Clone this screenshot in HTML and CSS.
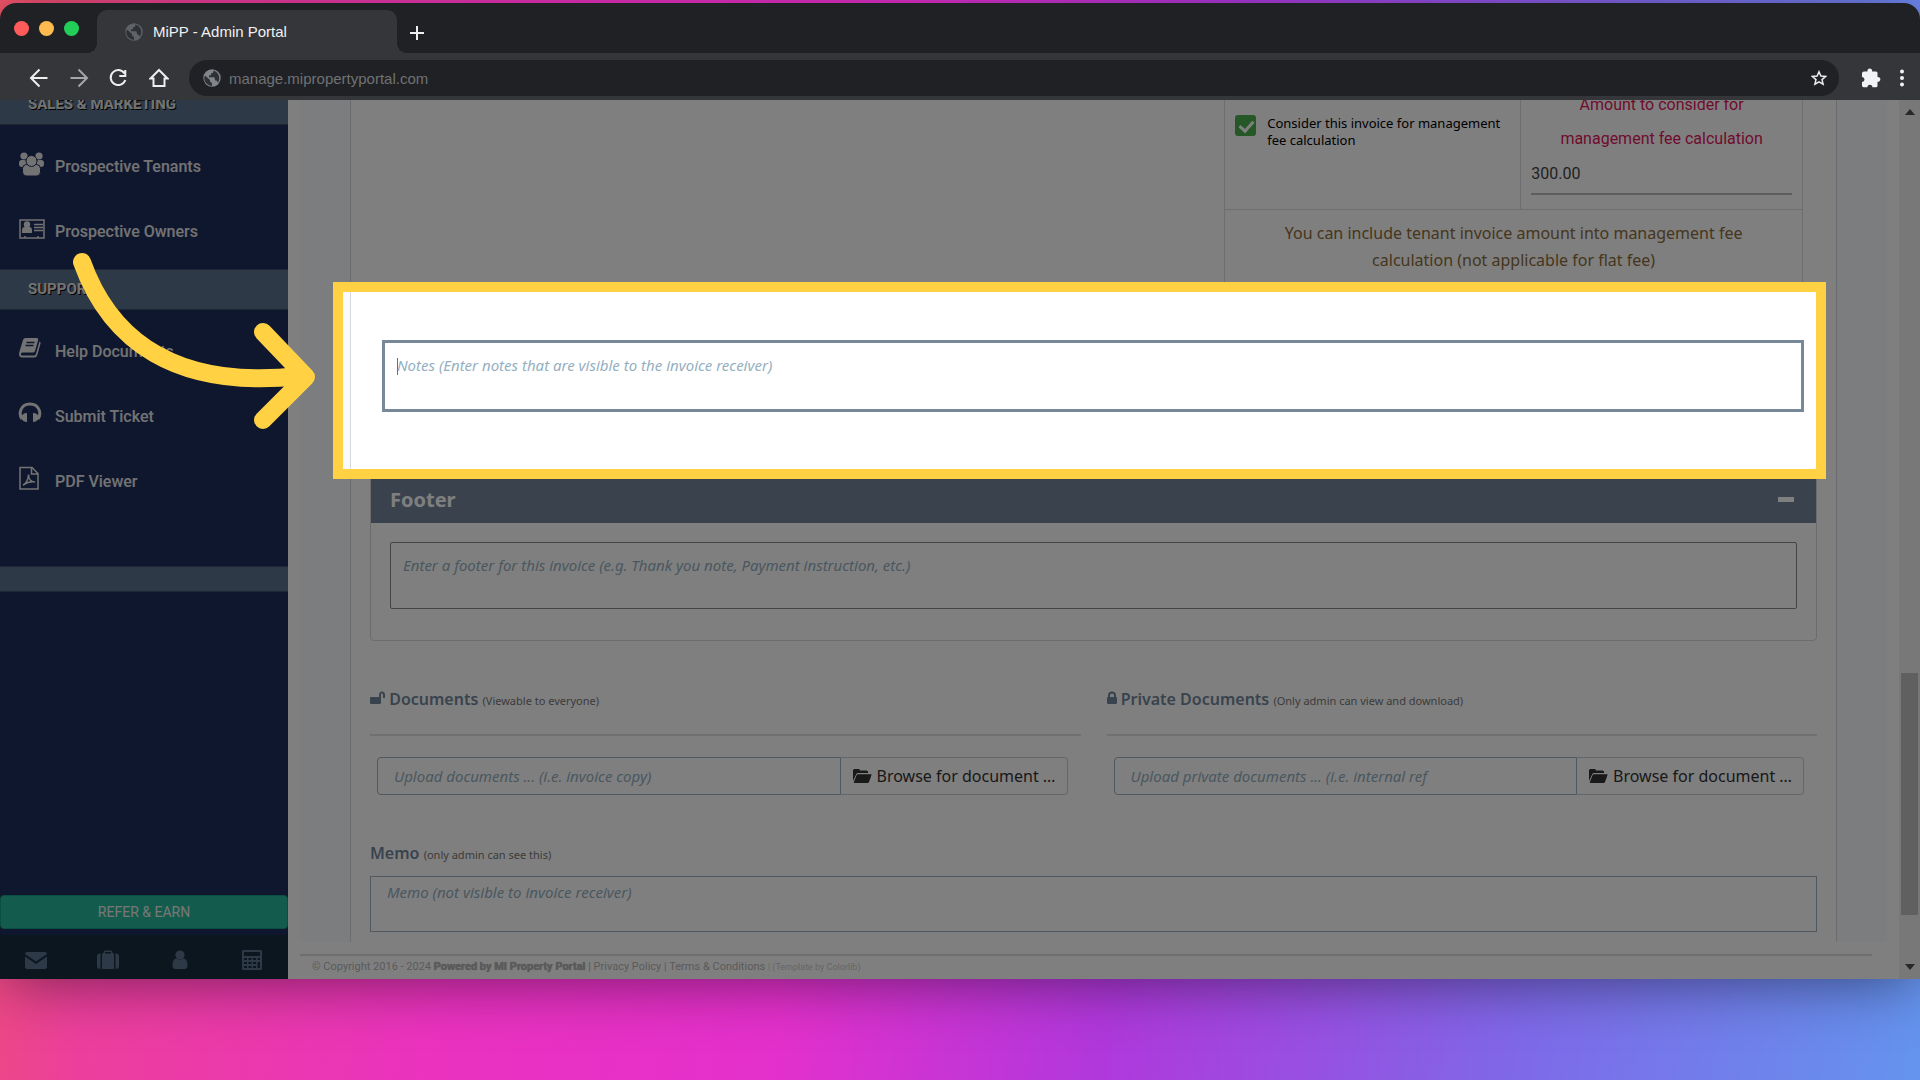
FILE: index.html
```
<!DOCTYPE html>
<html lang="en">
<head>
    <meta charset="UTF-8">
    <meta name="viewport" content="width=device-width, initial-scale=1.0">
    <title>MiPP - Admin Portal</title>
    <link rel="stylesheet" href="styles.css">
</head>
<body>
    <svg class="sprite" aria-hidden="true">
        <symbol id="globe" viewBox="0 0 18 18">
            <circle cx="9" cy="9" r="8.7"/>
            <path class="globe-land" d="M2 6.5 7 11v1.5l2 1.800V17A8 8 0 0 1 1.200 9 8 8 0 0 1 2 6.500zM10.500 1.500c0 2-.8 2.800-2.500 2.800v2H6v2h5.300l1 3.200h1.200l1.500 2A8 8 0 0 0 10.500 1.500z"/>
        </symbol>
        <symbol id="folder" viewBox="0 0 20 16">
            <path d="M1 13V2.500Q1 1 2.500 1h4.200Q8 1 8 2.500h6.500Q16 2.500 16 4v1H6Q4.800 5 4.200 6.200z"/>
            <path d="M6 6.200h13q.8 0 .5.800L17 14q-.4 1-1.400 1H2.500q-.9 0-.6-.9L4.700 7q.4-.8 1.300-.8z"/>
        </symbol>
    </svg>

    <div class="window">
        <div class="tab-strip">
            <div class="lights">
                <span class="light red"></span>
                <span class="light amber"></span>
                <span class="light green"></span>
            </div>
            <div class="tab">
                <svg class="globe" width="18" height="18"><use href="#globe"/></svg>
                <span>MiPP - Admin Portal</span>
            </div>
            <button class="icon-button new-tab" aria-label="New tab">
                <svg width="16" height="16" viewBox="0 0 16 16"><path d="M8 1v14M1 8h14"/></svg>
            </button>
        </div>

        <div class="toolbar">
            <div class="nav-buttons">
                <button class="icon-button" aria-label="Back">
                    <svg width="20" height="20" viewBox="0 0 20 20"><path d="M18.500 10H2.500M10.500 1.500 2 10l8.500 8.500"/></svg>
                </button>
                <button class="icon-button faded" aria-label="Forward">
                    <svg width="20" height="20" viewBox="0 0 20 20"><path d="M1.500 10h16M9.500 1.500 18 10l-8.500 8.500"/></svg>
                </button>
                <button class="icon-button" aria-label="Reload">
                    <svg width="20" height="20" viewBox="0 0 20 20"><path d="M15.500 5.500A7.500 7.500 0 1 0 16.300 12M16.300 2v6h-6"/></svg>
                </button>
                <button class="icon-button" aria-label="Home">
                    <svg width="20" height="20" viewBox="0 0 20 20"><path d="M1.500 10.500 10 2l8.500 8.500h-3V18h-11v-7.500z"/></svg>
                </button>
            </div>
            <div class="address">
                <svg class="globe bright" width="18" height="18"><use href="#globe"/></svg>
                <input type="text" aria-label="Address" value="manage.mipropertyportal.com">
                <button class="icon-button star" aria-label="Bookmark">
                    <svg width="16" height="16" viewBox="0 0 16 16"><path d="m8 1.800 1.900 4.300 4.700.4-3.600 3.100 1.100 4.600L8 11.800l-4.100 2.400L5 9.600 1.400 6.500l4.700-.4z"/></svg>
                </button>
            </div>
            <button class="icon-button solid extensions" aria-label="Extensions">
                <svg width="20" height="20" viewBox="0 0 20 20"><path d="M1 5.500Q1 3.500 3 3.500h3.500a2.400 2.400 0 1 1 4.600 0H15q1.500 0 1.500 1.500v4a2.400 2.400 0 1 1 0 4.700v4q0 1.500-1.500 1.500h-3.600a2.500 2.500 0 0 0-5 0H2.500Q1 19.200 1 17.500V14a2.500 2.500 0 0 0 0-5z"/></svg>
            </button>
            <button class="icon-button solid" aria-label="Menu">
                <svg width="6" height="18" viewBox="0 0 6 18"><circle cx="3" cy="2.500" r="2"/><circle cx="3" cy="9" r="2"/><circle cx="3" cy="15.500" r="2"/></svg>
            </button>
        </div>

        <div class="viewport">
            <aside class="sidebar">
                <h3 class="sales">SALES &amp; MARKETING</h3>
                <ul>
                    <li><a href="#">
                        <svg width="28" height="26" viewBox="0 0 28 26"><circle cx="6" cy="5" r="3.600"/><circle cx="21" cy="5" r="3.600"/><rect x="1" y="9" width="8" height="7" rx="3"/><rect x="18" y="9" width="8" height="7" rx="3"/><g class="cutout"><rect x="4.500" y="13.500" width="18" height="11.500" rx="4"/><circle cx="13.500" cy="10" r="5.500"/></g></svg>
                        Prospective Tenants</a></li>
                    <li><a href="#">
                        <svg width="28" height="26" viewBox="0 0 28 26"><path class="line" d="M2 4h24v18H2zM16 8.500h9M16 11.500h9M16 14.500h9M7 20v2M20 20v2"/><circle cx="9" cy="8.500" r="3.200"/><path d="M4 17v-3q0-3 3-3h4q3 0 3 3v3z"/></svg>
                        Prospective Owners</a></li>
                </ul>
                <h3>SUPPORT</h3>
                <ul>
                    <li><a href="#">
                        <svg width="28" height="26" viewBox="0 0 28 26"><path d="M7.500 2h11.200q2 0 1.500 2L17 15q-.4 1.500-2 1.500H4.500q-1.700 0-1.700 1.500t1.700 1.500h11.800q1.200 0 1.500-1.200L21.500 5.500q1.500.5 1 2L19.300 19q-.6 2.500-3 2.500H4.500Q1 21.500 1 18q0-1 .5-2.500L5 4q.5-2 2.500-2z"/><path class="slot" d="M8.500 6.500h8M7.500 9.500h8"/></svg>
                        Help Documents</a></li>
                    <li><a href="#">
                        <svg width="28" height="26" viewBox="0 0 28 26"><path class="arc" d="M4 18c-4-6-1-15 8-15s12 9 8 15"/><path d="M9 12v9q-4 0-6-4 1-5 6-5zM15 12v9q4 0 6-4-1-5-6-5z"/></svg>
                        Submit Ticket</a></li>
                    <li><a href="#">
                        <svg width="28" height="26" viewBox="0 0 28 26"><path class="line" d="M2 1.500h12l6 6V23H2zM13.500 1.500V8H20M5 19c3-1 5.500-6 5.500-10.500 0 5 3 8 6.500 7.500-4-1-8 .5-12 3z"/></svg>
                        PDF Viewer</a></li>
                </ul>
                <h3 class="blank"></h3>
                <div class="sidebar-bottom">
                    <button class="refer">REFER &amp; EARN</button>
                    <div class="shortcuts">
                        <a href="#" aria-label="Mail"><svg width="22" height="20" viewBox="0 0 22 20"><path d="M0 4q0-2 2-2h18q2 0 2 2L11 11.500zM0 6.500 11 14l11-7.500V17q0 2-2 2H2q-2 0-2-2z"/></svg></a>
                        <a href="#" aria-label="Briefcase"><svg width="22" height="20" viewBox="0 0 22 20"><path d="M3.500 3.500V19Q0 19 0 16V6.500q0-3 3.500-3zM18.500 3.500V19q3.500 0 3.500-3V6.500q0-3-3.500-3zM5 19V3.500h1.500V2q0-1.500 1.500-1.500h6q1.500 0 1.500 1.500v1.500H17V19zM8 3.500h6V2H8z" fill-rule="evenodd"/></svg></a>
                        <a href="#" aria-label="Profile"><svg width="22" height="20" viewBox="0 0 22 20"><circle cx="11" cy="5" r="4.600"/><path d="M3.500 15q0-6.500 4-6.500 3.500 2.500 7 0 4 0 4 6.500 0 4-3 4h-9q-3 0-3-4z"/></svg></a>
                        <a href="#" aria-label="Calculator"><svg width="22" height="20" viewBox="0 0 22 20"><path fill-rule="evenodd" d="M1 1q0-1 1-1h18q1 0 1 1v18q0 1-1 1H2q-1 0-1-1zM3 2v4h16V2zM3 8v2h3V8zM7.500 8v2h3V8zM12 8v2h3V8zM16.500 8v2H19V8zM3 12v2h3v-2zM7.500 12v2h3v-2zM12 12v2h3v-2zM16.500 12v6H19v-6zM3 16v2h3v-2zM7.500 16v2h3v-2zM12 16v2h3v-2z"/></svg></a>
                    </div>
                </div>
            </aside>

            <main class="main">
                <div class="page">
                    <div class="invoice">
                        <table class="fee-table">
                            <tr>
                                <td class="fee-check">
                                    <label>
                                        <input type="checkbox" checked>
                                        <span>Consider this invoice for management fee calculation</span>
                                    </label>
                                </td>
                                <td class="fee-amount">
                                    <label for="amount">Amount to consider for management fee calculation</label>
                                    <input type="text" id="amount" value="300.00">
                                </td>
                            </tr>
                            <tr>
                                <td class="fee-note" colspan="2">You can include tenant invoice amount into management fee calculation (not applicable for flat fee)</td>
                            </tr>
                        </table>

                        <div class="notes">
                            <textarea aria-label="Notes" placeholder="Notes (Enter notes that are visible to the invoice receiver)"></textarea>
                        </div>

                        <section class="panel">
                            <header>
                                <h2>Footer</h2>
                                <button class="collapse" aria-label="Collapse"></button>
                            </header>
                            <textarea aria-label="Footer" placeholder="Enter a footer for this invoice (e.g. Thank you note, Payment instruction, etc.)"></textarea>
                        </section>

                        <div class="documents">
                            <section>
                                <h4>
                                    <svg width="15" height="14" viewBox="0 0 15 14"><path d="M1 6h8V4Q9 .5 12 .5T15 4v3h-2V4q0-1.700-1-1.700T11 4v8q0 1-1 1H1q-1 0-1-1V7q0-1 1-1z"/></svg>
                                    <label for="docs">Documents</label> <small>(Viewable to everyone)</small>
                                </h4>
                                <div class="upload">
                                    <input type="text" id="docs" placeholder="Upload documents ... (i.e. invoice copy)">
                                    <button><svg width="20" height="16"><use href="#folder"/></svg>Browse for document …</button>
                                </div>
                            </section>
                            <section>
                                <h4>
                                    <svg width="10" height="14" viewBox="0 0 10 14"><path fill-rule="evenodd" d="M1 6V4.500Q1 .5 5 .5t4 4V6q1 0 1 1v5q0 1-1 1H1q-1 0-1-1V7q0-1 1-1zM3 6h4V4.500Q7 2.400 5 2.400T3 4.500z"/></svg>
                                    <label for="private-docs">Private Documents</label> <small>(Only admin can view and download)</small>
                                </h4>
                                <div class="upload">
                                    <input type="text" id="private-docs" placeholder="Upload private documents ... (i.e. internal ref">
                                    <button><svg width="20" height="16"><use href="#folder"/></svg>Browse for document …</button>
                                </div>
                            </section>
                        </div>

                        <div class="memo">
                            <h4><label for="memo">Memo</label> <small>(only admin can see this)</small></h4>
                            <textarea id="memo" placeholder="Memo (not visible to invoice receiver)"></textarea>
                        </div>
                    </div>
                </div>
                <footer class="copyright">
                    © Copyright 2016 - 2024 <b>Powered by MI Property Portal</b> | <a href="#">Privacy Policy</a> | <a href="#">Terms &amp; Conditions</a> <small>| (Template by <a href="#">Colorlib</a>)</small>
                </footer>
            </main>

            <div class="scrollbar">
                <svg width="10" height="6" viewBox="0 0 10 6"><path d="M5 0l5 6H0z"/></svg>
                <div class="track"><div class="thumb"></div></div>
                <svg width="10" height="6" viewBox="0 0 10 6"><path d="M0 0h10L5 6z"/></svg>
            </div>

            <div class="highlight"></div>
            <svg class="arrow" width="250" height="190" viewBox="70 250 250 190"><path d="M82 262C110 340 175 390 300 376M263 332l43 45-43 43"/></svg>
        </div>
    </div>
</body>
</html>
```
FILE: styles.css
```
* {
    box-sizing: border-box;
}

body {
    display: flex;
    flex-direction: column;
    height: 100vh;
    margin: 0;
    padding: 3px 0 101px;
    overflow: hidden;
    font-family: "Noto Sans", sans-serif;
    font-size: 16px;
    color: #333;
    background: linear-gradient(97deg, #ee5468 0%, #ec3f9c 10%, #ea32c0 28%, #e430cc 44%, #b038dc 60%, #7f68e8 80%, #6494ee 100%);
}

button, input, textarea {
    font: inherit;
    border: 0;
    background: none;
}

a {
    color: inherit;
    text-decoration: none;
}

.sprite {
    position: absolute;
    width: 0;
    height: 0;
}

.window {
    display: flex;
    flex: 1;
    flex-direction: column;
    min-height: 0;
    border-radius: 16px 16px 0 0;
    box-shadow: 0 8px 60px -6px rgba(0, 0, 0, 0.5);
}

/* Browser chrome */
.tab-strip {
    display: flex;
    align-items: center;
    height: 50px;
    padding-left: 14px;
    border-radius: 16px 16px 0 0;
    background: #202124;
    font-family: "Liberation Sans", sans-serif;
}

.lights {
    display: flex;
    gap: 10px;
    width: 83px;
}

.light {
    width: 15px;
    height: 15px;
    border-radius: 50%;
}

.red { background: #ff5b5b; }
.amber { background: #ffbb4f; }
.green { background: #23ce58; }

.tab {
    position: relative;
    display: flex;
    align-items: center;
    align-self: flex-end;
    gap: 10px;
    width: 300px;
    height: 43px;
    padding: 0 28px;
    border-radius: 10px 10px 0 0;
    background: #35363a;
    color: #f1f1f1;
    font-size: 15px;
}

.tab::before, .tab::after {
    content: "";
    position: absolute;
    bottom: 0;
    width: 10px;
    height: 10px;
}

.tab::before {
    right: 100%;
    background: radial-gradient(circle at 0 0, #202124 10px, #35363a 10px);
}

.tab::after {
    left: 100%;
    background: radial-gradient(circle at 100% 0, #202124 10px, #35363a 10px);
}

.globe {
    fill: #5f6368;
}

.globe.bright {
    fill: #80868b;
}

.globe-land {
    fill: #303134;
}

.icon-button {
    display: flex;
    padding: 0;
    fill: none;
    stroke: #eee;
    stroke-width: 2;
}

.icon-button.faded {
    stroke: #a5a6a8;
}

.icon-button.solid {
    fill: #f1f3f4;
    stroke: none;
}

.icon-button.star {
    stroke-width: 1.5;
}

.new-tab {
    margin: 10px 12px 0;
}

.toolbar {
    display: flex;
    align-items: center;
    height: 47px;
    padding: 3px 15px 0 29px;
    background: #35363a;
}

.nav-buttons {
    display: flex;
    gap: 20px;
    width: 160px;
}

.address {
    display: flex;
    flex: 1;
    align-items: center;
    gap: 8px;
    height: 36px;
    padding: 0 12px 0 14px;
    border-radius: 18px;
    background: #202124;
}

.address input {
    flex: 1;
    padding: 0;
    font-family: "Liberation Sans", sans-serif;
    font-size: 15px;
    color: #6f7276;
}

.extensions {
    margin: 0 18px 0 22px;
}

/* Page area */
.viewport {
    position: relative;
    display: flex;
    flex: 1;
    min-height: 0;
    overflow: hidden;
    background: #fff;
}

.sidebar {
    display: flex;
    flex-direction: column;
    width: 288px;
    background: #1e2f5e;
    color: #e7e7e7;
    font-family: Roboto, sans-serif;
}

.sidebar h3 {
    flex-shrink: 0;
    height: 41px;
    margin: 0;
    padding-left: 28px;
    border: 1px solid #3a4f6c;
    border-width: 1px 0;
    background: #5a738e;
    font-size: 15px;
    line-height: 39px;
    text-shadow: 1px 1px #000;
}

.sidebar .sales {
    margin-top: -16px;
}

.sidebar .blank {
    height: 26px;
    margin-top: 47px;
}

.sidebar ul {
    margin: 0;
    padding: 9px 0 5px;
    list-style: none;
}

.sidebar li a {
    display: flex;
    align-items: center;
    gap: 9px;
    height: 65px;
    padding-left: 18px;
    font-weight: 500;
}

.sidebar li svg {
    margin-bottom: 5px;
    fill: #e7e7e7;
}

.cutout {
    stroke: #1e2f5e;
}

.line, .arc {
    fill: none;
    stroke: #e7e7e7;
    stroke-width: 1.5;
}

.arc {
    stroke-width: 3;
}

.slot {
    stroke: #1e2f5e;
    stroke-width: 1.5;
}

.sidebar-bottom {
    margin-top: auto;
}

.refer {
    display: block;
    width: 100%;
    height: 34px;
    margin-bottom: 6px;
    border: 1px solid #169f85;
    border-radius: 4px;
    background: #26b99a;
    color: #eee;
    font-size: 14px;
}

.shortcuts {
    display: flex;
    height: 44px;
    padding-top: 6px;
    background: #172d3c;
    fill: #5a738e;
}

.shortcuts a {
    display: flex;
    flex: 1;
    align-items: center;
    justify-content: center;
}

.main {
    flex: 1;
    padding: 0 12px;
}

.page {
    padding: 0 50px;
    background: #f8fafd;
}

.invoice {
    padding: 0 19px 10px;
    border: 1px solid #d5d9de;
    border-width: 0 1px;
    background: #fff;
}

.fee-table {
    width: 40%;
    margin: -13px 14px 0 auto;
    border-collapse: collapse;
}

.fee-table td {
    padding: 0;
    border: 1px solid #ddd;
    vertical-align: top;
}

.fee-table .fee-check {
    width: 296px;
    padding: 27px 10px 0;
    color: #000;
    font-size: 13px;
    line-height: 17px;
}

.fee-check label {
    display: flex;
    gap: 11px;
}

.fee-check input {
    flex-shrink: 0;
    appearance: none;
    width: 21px;
    height: 21px;
    margin: 0;
    border-radius: 3px;
    background: #4cae4c;
}

.fee-check input::before {
    content: "";
    display: block;
    width: 6px;
    height: 11px;
    margin: 3px 7px;
    border: solid #fff;
    border-width: 0 3px 3px 0;
    transform: rotate(42deg);
}

.fee-table .fee-amount {
    padding: 0 10px 14px;
    font-family: Roboto, sans-serif;
}

.fee-amount label {
    display: block;
    padding: 0 20px;
    color: #e0175b;
    line-height: 34px;
    text-align: center;
}

.fee-amount input {
    width: 100%;
    height: 39px;
    padding: 0 0 2px;
    border-bottom: 2px solid #bbb;
    color: #444;
}

.fee-table .fee-note {
    padding: 10px 40px;
    color: #8a6d3b;
    line-height: 27px;
    text-align: center;
}

textarea {
    display: block;
    width: 100%;
    padding: 12px;
    border: 1px solid #aaa;
    resize: none;
    font-size: 15px;
}

textarea::placeholder, .upload input::placeholder {
    color: #94afbf;
    font-style: italic;
    opacity: 1;
}

.notes {
    position: relative;
    padding: 55px 13px 62px 12px;
}

.notes textarea {
    height: 72px;
    border: 3px solid #778899;
}

/* Text cursor at the start of the notes box */
.notes::before {
    content: "";
    position: absolute;
    top: 73px;
    left: 27px;
    width: 1px;
    height: 17px;
    background: #5a738e;
}

.panel {
    border: 1px solid #d8d8d8;
    border-radius: 4px;
}

.panel header {
    display: flex;
    align-items: center;
    justify-content: space-between;
    height: 48px;
    padding: 0 22px 0 19px;
    background: #74869a;
    color: #fff;
}

.panel h2 {
    margin: 0;
    font-size: 20px;
}

.collapse {
    width: 16px;
    height: 5px;
    padding: 0;
    background: #fff;
}

.panel textarea {
    width: calc(100% - 38px);
    height: 67px;
    margin: 19px 19px 31px;
    border-color: #888;
    border-radius: 2px;
}

.documents {
    display: grid;
    grid-template-columns: 1fr 1fr;
    gap: 26px;
    margin-top: 46px;
}

h4 {
    margin: 0;
    color: #73879c;
    font-size: 16px;
    font-weight: 600;
    line-height: 24px;
}

h4 svg {
    fill: #73879c;
}

h4 small {
    color: #777;
    font-size: 11px;
    font-weight: 400;
}

.documents h4 {
    padding-bottom: 21px;
    border-bottom: 2px solid #e0e0e0;
}

.upload {
    display: flex;
    height: 38px;
    margin: 21px 13px 0 7px;
}

.upload input {
    flex: 1;
    min-width: 0;
    padding: 0 16px;
    border: 1px solid #a0b0c0;
    border-radius: 4px 0 0 4px;
    font-size: 15px;
}

.upload button {
    display: flex;
    align-items: center;
    gap: 5px;
    padding: 0 11px;
    border: 1px solid #ccc;
    border-left: 0;
    border-radius: 0 4px 4px 0;
    color: #333;
    fill: #333;
    font-size: 16px;
}

.memo {
    margin-top: 46px;
}

.memo textarea {
    height: 56px;
    margin-top: 9px;
    padding: 5px 16px;
    border-color: #a0b0c0;
}

.copyright {
    margin: 12px 15px 0 0;
    padding: 3px 12px;
    border-top: 2px solid #ddd;
    color: #b5b5b5;
    font-family: Roboto, sans-serif;
    font-size: 11px;
    line-height: 16px;
}

.copyright b {
    text-shadow: 0 0 1px #999;
}

.copyright small {
    color: #ccc;
    font-size: 9px;
}

.scrollbar {
    display: flex;
    flex-direction: column;
    align-items: center;
    gap: 8px;
    width: 21px;
    padding: 9px 0;
    background: #f1f1f1;
    fill: #505050;
}

.track {
    flex: 1;
    width: 17px;
}

/* 29% tall thumb near the bottom of the track */
.thumb {
    height: 29%;
    margin-top: 550px;
    background: #c1c1c1;
}

/* Callout: dims everything but the notes box */
.highlight {
    position: absolute;
    top: 182px;
    right: 94px;
    left: 333px;
    height: 197px;
    border: 10px solid #ffd143;
    box-shadow: 0 0 0 2000px rgba(0, 0, 0, 0.5);
}

.arrow {
    position: absolute;
    top: 150px;
    left: 70px;
    fill: none;
    stroke: #ffd143;
    stroke-width: 18;
    stroke-linecap: round;
    stroke-linejoin: round;
}
```
